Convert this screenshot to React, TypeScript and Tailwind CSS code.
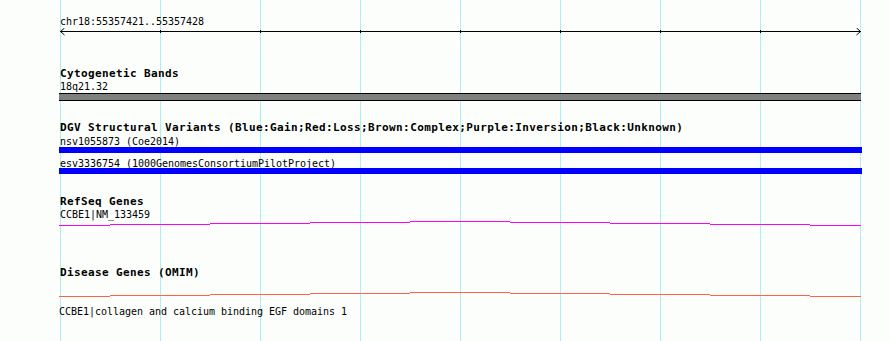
import React from "react";

const gridXs = [60, 160, 260, 360, 460, 560, 660, 760, 860];
const segStarts = [59, 110, 210, 310, 410, 510, 610, 710, 810];
const segEnds = [110, 210, 310, 410, 510, 610, 710, 810, 861];
const stepOffsets = [4, 3, 2, 1, 0, 1, 2, 3, 4];

function StepLine({ color, top, height }: { color: string; top: number; height: number }) {
  return (
    <svg width={890} height={height} className="block -ml-[60px]" shapeRendering="crispEdges">
      {segStarts.map((s, i) => (
        <rect key={i} x={s} y={top + stepOffsets[i]} width={segEnds[i] - s} height={1} fill={color} />
      ))}
    </svg>
  );
}

const title = "font-['DejaVu_Sans_Mono',monospace] font-bold text-[11px] leading-[12px] tracking-[0.38px] text-black whitespace-nowrap";
const label = "font-['DejaVu_Sans_Mono',monospace] text-[10px] leading-[13px] tracking-[-0.02px] text-black whitespace-nowrap";

export default function App() {
  return (
    <div className="relative w-[890px] h-[341px] overflow-hidden bg-[#fcfefc]">
      <svg className="absolute inset-0" width={890} height={341} shapeRendering="crispEdges">
        {gridXs.map((x) => (
          <rect key={x} x={x} y={0} width={1} height={341} fill="#afeeee" />
        ))}
      </svg>
      <div className="relative pl-[60px] pt-[15px] flex flex-col">
        {/* Ruler */}
        <div className={label}>chr18:55357421..55357428</div>
        <svg width={890} height={8} className="block -ml-[60px]" shapeRendering="crispEdges">
          <rect x={60} y={3} width={801} height={1} fill="#000" />
          {[160, 260, 360, 460, 560, 660, 760].map((x) => (
            <rect key={x} x={x} y={2} width={1} height={3} fill="#000" />
          ))}
          <path d="M64.5 0 L60.5 3.5 L64.5 7" stroke="#000" strokeWidth={1} fill="none" shapeRendering="auto" />
          <path d="M856.5 0 L860.5 3.5 L856.5 7" stroke="#000" strokeWidth={1} fill="none" shapeRendering="auto" />
        </svg>

        {/* Cytogenetic Bands */}
        <div className={`${title} mt-[32px]`}>Cytogenetic Bands</div>
        <div className={label}>18q21.32</div>
        <div className="-ml-[1px] w-[802px] h-[8px] border-y border-black bg-[#808080]" />

        {/* DGV */}
        <div className={`${title} mt-[21px]`}>
          DGV Structural Variants (Blue:Gain;Red:Loss;Brown:Complex;Purple:Inversion;Black:Unknown)
        </div>
        <div className={`${label} mt-[1px]`}>nsv1055873 (Coe2014)</div>
        <div className="-mt-[1px] -ml-[1px] w-[803px] h-[6px] bg-[#0000ff]" />
        <div className={`${label} mt-[4px]`}>esv3336754 (1000GenomesConsortiumPilotProject)</div>
        <div className="-mt-[2px] -ml-[1px] w-[803px] h-[6px] bg-[#0000ff]" />

        {/* RefSeq */}
        <div className={`${title} mt-[22px]`}>RefSeq Genes</div>
        <div className={label}>CCBE1|NM_133459</div>
        <StepLine color="#ff00ff" top={0} height={5} />

        {/* Disease */}
        <div className={`${title} mt-[41px]`}>Disease Genes (OMIM)</div>
        <StepLine color="#ff6347" top={13} height={20} />
        <div className={`${label} mt-[6px] -ml-[1px] text-[#1010b0]`}>
          CCBE1|collagen and calcium binding EGF domains 1
        </div>
      </div>
    </div>
  );
}
